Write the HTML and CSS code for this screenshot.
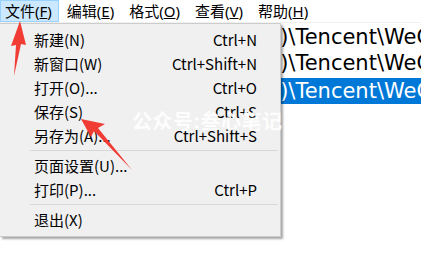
FILE: index.html
```html
<!DOCTYPE html>
<html lang="zh-CN">
<head>
  <meta charset="UTF-8">
  <title>记事本 - 文件菜单</title>
  <link rel="stylesheet" href="styles.css">
</head>
<body>
  <div class="menubar">
    <span class="top-item active">文件(<u>F</u>)</span>
    <span class="top-item">编辑(<u>E</u>)</span>
    <span class="top-item">格式(<u>O</u>)</span>
    <span class="top-item">查看(<u>V</u>)</span>
    <span class="top-item">帮助(<u>H</u>)</span>
  </div>

  <div class="editor">
    <div class="line">x86)\Tencent\WeChat\WeChat.exe</div>
    <div class="line">x86)\Tencent\WeChat\WeChat.exe</div>
    <div class="line selected">x86)\Tencent\WeChat\WeChat.exe</div>
  </div>

  <!-- 下拉菜单 -->
  <div class="dropdown">
    <div class="item"><span>新建(N)</span><span class="key">Ctrl+N</span></div>
    <div class="item"><span>新窗口(W)</span><span class="key">Ctrl+Shift+N</span></div>
    <div class="item"><span>打开(O)...</span><span class="key">Ctrl+O</span></div>
    <div class="item"><span>保存(S)</span><span class="key">Ctrl+S</span></div>
    <div class="item"><span>另存为(A)...</span><span class="key">Ctrl+Shift+S</span></div>
    <div class="sep"></div>
    <div class="item"><span>页面设置(U)...</span><span class="key"></span></div>
    <div class="item"><span>打印(P)...</span><span class="key">Ctrl+P</span></div>
    <div class="sep"></div>
    <div class="item"><span>退出(X)</span><span class="key"></span></div>
  </div>

  <div class="watermark">公众号:叁心笔记</div>

  <svg class="arrows" width="421" height="259" viewBox="0 0 421 259">
    <polygon points="20,21 26,45 21,44 14,76 16,45 11,46" fill="#f03c34"/>
    <polygon points="81,119 105,124 98,128 132,170 94,131 91,137" fill="#f03c34"/>
  </svg>
</body>
</html>
```

FILE: styles.css
```css
body {
  margin: 0;
  width: 421px;
  height: 259px;
  overflow: hidden;
  background: #fff;
  position: relative;
  font-family: "Noto Sans CJK SC", "Noto Sans", sans-serif;
  color: #000;
}
.menubar {
  display: flex;
  height: 22px;
  border-bottom: 1px solid #f0f0f0;
  background: #fff;
  font-family: "Noto Sans", "Noto Sans CJK SC", sans-serif;
  font-size: 15px;
  line-height: 20px;
}
.top-item {
  padding: 0 6px 0 4px;
  margin-right: 3px;
  border: 1px solid transparent;
  white-space: nowrap;
}
.top-item.active {
  background: #cce8ff;
  border-color: #99d1ff;
}
.editor {
  padding-top: 1px;
  font-family: "DejaVu Sans", sans-serif;
  font-size: 21px;
}
.line {
  height: 26px;
  line-height: 26px;
  padding-left: 241px;
  white-space: nowrap;
}
.line.selected {
  margin-top: 2px;
  background: #0078d7;
  color: #fff;
}
.dropdown {
  position: absolute;
  left: 0;
  top: 23px;
  width: 280px;
  padding: 4px 0;
  background: #f0f0f0;
  border: 1px solid #cccccc;
  border-left: none;
  box-shadow: 2px 2px 2px rgba(0, 0, 0, 0.35);
  font-size: 15px;
}
.item {
  display: flex;
  justify-content: space-between;
  height: 24px;
  line-height: 24px;
  padding: 0 23px 0 34px;
  white-space: nowrap;
}
.sep {
  height: 1px;
  margin: 2px 2px 3px 30px;
  background: #d7d7d7;
}
.watermark {
  position: absolute;
  left: 132px;
  top: 106px;
  font-size: 20px;
  font-weight: bold;
  letter-spacing: 0.5px;
  color: rgba(255, 255, 255, 0.92);
  white-space: nowrap;
}
.arrows {
  position: absolute;
  left: 0;
  top: 0;
}
```
